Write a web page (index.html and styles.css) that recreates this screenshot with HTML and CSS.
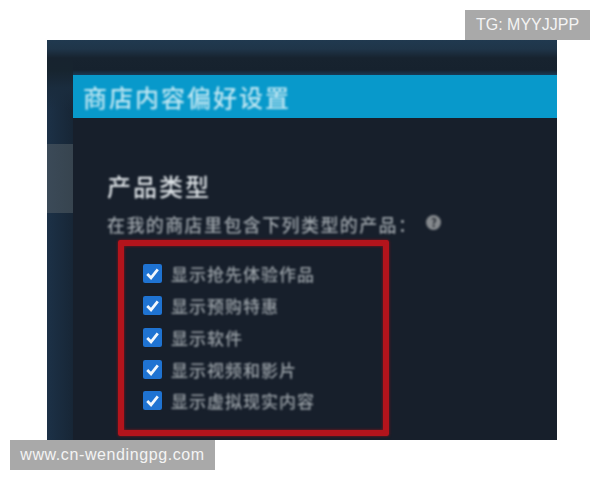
FILE: index.html
```
<!DOCTYPE html>
<html lang="zh-CN">
<head>
<meta charset="utf-8">
<title>商店内容偏好设置</title>
<link rel="stylesheet" href="styles.css">
</head>
<body>
<div class="stage">
  <div class="photo">
    <div class="rail"><div class="rail-thumb"></div></div>
    <div class="main">
      <div class="banner"><span class="banner-title">商店内容偏好设置</span></div>
      <div class="content">
        <h2 class="heading">产品类型</h2>
        <div class="intro"><span>在我的商店里包含下列类型的产品：</span><span class="help">?</span></div>
        <div class="redbox">
          <div class="row"><svg class="check" viewBox="0 0 18 18"><rect width="18" height="18" rx="2"/><path d="M4 9.5l3.6 3.6L14 5"/></svg><span>显示抢先体验作品</span></div>
          <div class="row"><svg class="check" viewBox="0 0 18 18"><rect width="18" height="18" rx="2"/><path d="M4 9.5l3.6 3.6L14 5"/></svg><span>显示预购特惠</span></div>
          <div class="row"><svg class="check" viewBox="0 0 18 18"><rect width="18" height="18" rx="2"/><path d="M4 9.5l3.6 3.6L14 5"/></svg><span>显示软件</span></div>
          <div class="row"><svg class="check" viewBox="0 0 18 18"><rect width="18" height="18" rx="2"/><path d="M4 9.5l3.6 3.6L14 5"/></svg><span>显示视频和影片</span></div>
          <div class="row"><svg class="check" viewBox="0 0 18 18"><rect width="18" height="18" rx="2"/><path d="M4 9.5l3.6 3.6L14 5"/></svg><span>显示虚拟现实内容</span></div>
        </div>
      </div>
    </div>
  </div>
  <div class="mark mark-top">TG: MYYJJPP</div>
  <div class="mark mark-bottom">www.cn-wendingpg.com</div>
</div>
</body>
</html>
```
FILE: styles.css
```
* { box-sizing: border-box; }
html, body { margin: 0; background: #fff; }
body { font-family: "Noto Sans CJK SC", "Liberation Sans", sans-serif; }
.stage { position: relative; width: 600px; height: 480px; padding: 40px 43px 40px 47px; overflow: hidden; }
.photo { display: flex; height: 400px; overflow: hidden; background: #16202c; }
.rail {
  width: 26px; flex: none; padding-top: 104px;
  background:
    linear-gradient(180deg, #20394f 0, #1f3549 9px, #17232f 18px, #17242f 30px, #1a2c3e 48px, rgba(26,44,62,0) 70px),
    linear-gradient(90deg, #1c3147, #172636);
}
.rail-thumb { height: 69px; background: linear-gradient(90deg, #3b4a58, #37444f); }
.main { flex: 1; padding-top: 35px; display: flex; flex-direction: column; background: linear-gradient(180deg, #20394f 0, #1f3549 9px, #17232f 18px, #16222e 30px, #1a3a55 35px); }
.banner {
  height: 43px; flex: none; background: #0899cb;
  display: flex; align-items: center; padding-left: 10px;
}
.banner-title { font-size: 24px; font-weight: 500; letter-spacing: 2px; color: #bfe6f2; filter: blur(.8px); line-height: 1; }
.content { flex: 1; background: #171f2b; padding: 51px 0 0 34px; }
.heading { margin: 0; font-size: 24px; font-weight: 500; letter-spacing: 2px; line-height: 34px; color: #dadfe3; filter: blur(.8px); }
.intro { margin-top: 9px; font-size: 18px; font-weight: 500; letter-spacing: 1.4px; line-height: 24px; color: #9ea5ab; display: flex; align-items: center; filter: blur(.8px); }
.help { width: 15px; height: 15px; margin: -4px 0 0 9px; border-radius: 50%; background: #85898d; color: #20262e; font-size: 11px; letter-spacing: 0; line-height: 15px; text-align: center; font-weight: 700; }
.redbox {
  width: 271px; height: 196px; margin: 4px 0 0 11px; padding: 12px 0 0 19px;
  border: 6px solid #b3141c; border-radius: 2px; display: flex; flex-direction: column;
  box-shadow: 0 0 3px #8f1118, inset 0 0 3px #8f1118;
}
.row { display: flex; align-items: center; height: 31.75px; gap: 9px; font-size: 17px; font-weight: 500; letter-spacing: 1px; color: #9aa1a7; }
.row span { filter: blur(.8px); }
.check { width: 19px; height: 19px; flex: none; filter: blur(.5px); }
.check rect { fill: #1f73d2; }
.check path { fill: none; stroke: #f2f7fc; stroke-width: 2.6; }
.mark { position: absolute; background: #a9a9a9; color: #f4f4f4; font-family: "Liberation Sans", sans-serif; font-size: 16px; line-height: 30px; height: 30px; text-align: center; }
.mark-top { left: 465px; top: 10px; width: 125px; }
.mark-bottom { left: 10px; top: 440px; width: 205px; letter-spacing: .6px; }
```
